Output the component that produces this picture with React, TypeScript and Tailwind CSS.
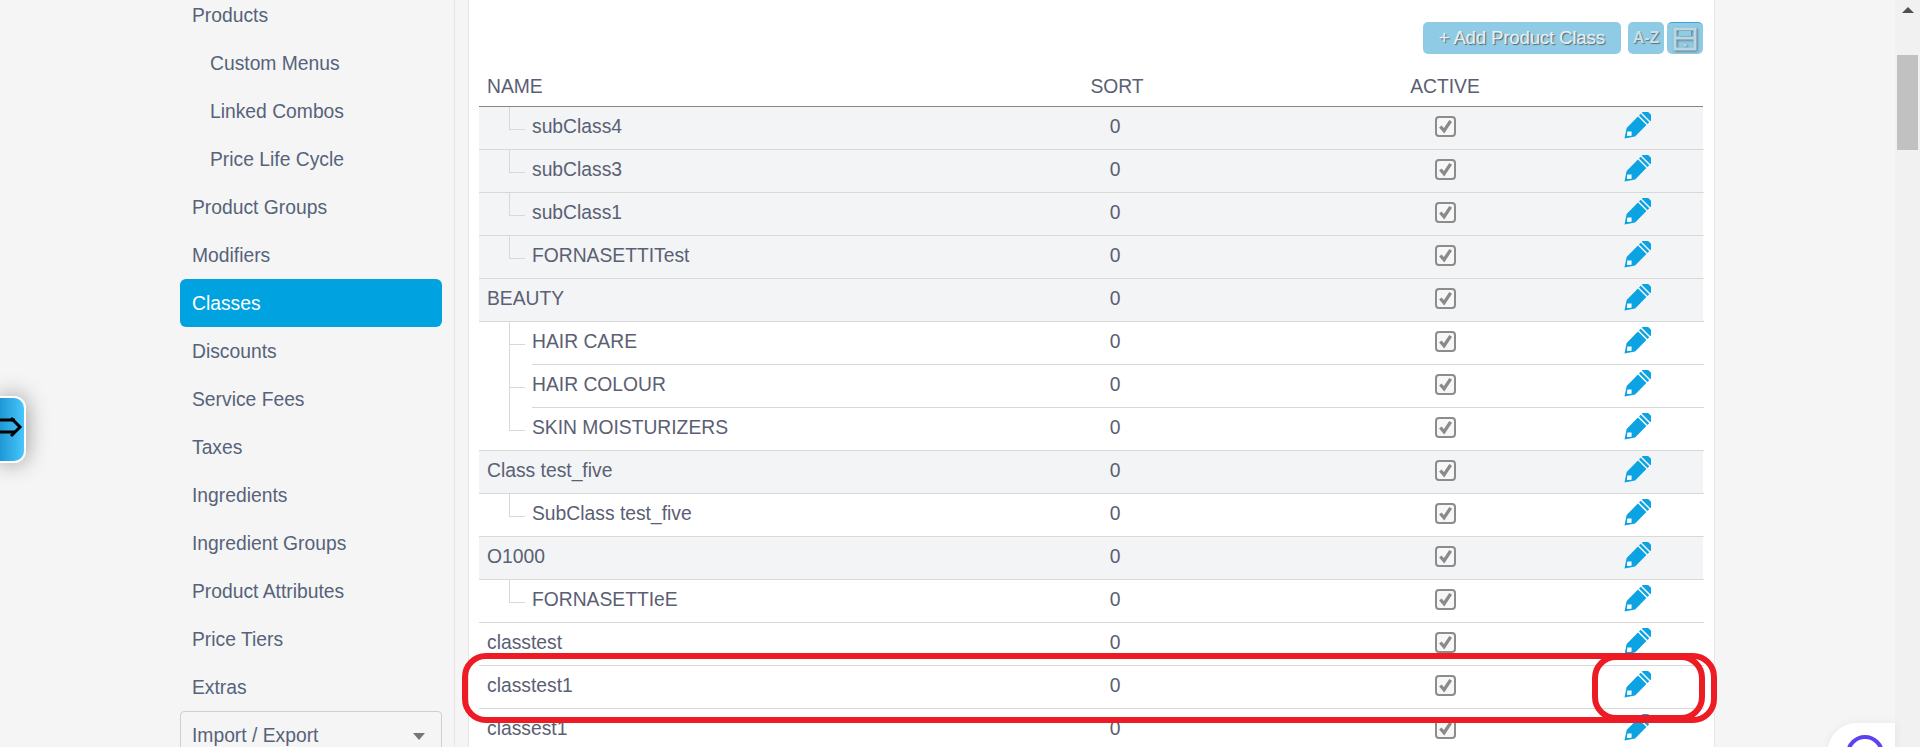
const menu = [
  { label: "Products" },
  { label: "Custom Menus", sub: true },
  { label: "Linked Combos", sub: true },
  { label: "Price Life Cycle", sub: true },
  { label: "Product Groups" },
  { label: "Modifiers" },
  { label: "Classes", active: true },
  { label: "Discounts" },
  { label: "Service Fees" },
  { label: "Taxes" },
  { label: "Ingredients" },
  { label: "Ingredient Groups" },
  { label: "Product Attributes" },
  { label: "Price Tiers" },
  { label: "Extras" },
];

type Row = { name: string; child?: boolean; open?: boolean; gray?: boolean };

const rows: Row[] = [
  { name: "subClass4", child: true, gray: true },
  { name: "subClass3", child: true, gray: true },
  { name: "subClass1", child: true, gray: true },
  { name: "FORNASETTITest", child: true, gray: true },
  { name: "BEAUTY", gray: true },
  { name: "HAIR CARE", child: true, open: true },
  { name: "HAIR COLOUR", child: true, open: true },
  { name: "SKIN MOISTURIZERS", child: true },
  { name: "Class test_five", gray: true },
  { name: "SubClass test_five", child: true },
  { name: "O1000", gray: true },
  { name: "FORNASETTIeE", child: true },
  { name: "classtest" },
  { name: "classtest1" },
  { name: "classest1" },
];

function Pencil() {
  return (
    <svg viewBox="0 0 27 27" className="w-[27px] h-[27px]">
      <g transform="translate(0.5 26.5) rotate(45)" fill="#0ca3e3">
        <path d="M0 0 L-6 -9 L-6 -25 L6 -25 L6 -9 Z" />
        <path d="M-6 -26.5 H6 V-29 H-6 Z" />
        <path d="M-6 -30.5 H6 V-33.5 Q6 -35.5 4 -35.5 H-4 Q-6 -35.5 -6 -33.5 Z" />
        <path d="M0 -3.5 L3 -7 L0 -10 L-3 -7 Z" fill="#ffffff" />
      </g>
    </svg>
  );
}

function Checkbox() {
  return (
    <div className="w-[21px] h-[21px] rounded-[4px] border-2 border-[#8c8c8c] bg-[#f7f7f7] flex items-center justify-center">
      <svg viewBox="0 0 16 16" className="w-[15px] h-[15px]">
        <path d="M2.5 8 L6.5 12.5 L13.5 2" fill="none" stroke="#8a8a8a" strokeWidth="3.5" />
      </svg>
    </div>
  );
}

function ClassRow({ row }: { row: Row }) {
  const full = !row.open;
  return (
    <div className={`flex h-[43px] shrink-0 ${row.gray ? "bg-[#f3f4f6]" : "bg-white"}`}>
      {row.child && (
        <div className={`w-[53px] shrink-0 pl-[30px] ${full ? "border-b border-[#d8d8d8]" : ""}`}>
          <div className={`w-[16px] border-l border-[#d8d8d8] ${row.open ? "h-full" : "h-[23px]"}`}>
            <div className="h-[23px] border-b border-[#d8d8d8]"></div>
          </div>
        </div>
      )}
      <div
        className={`flex-1 border-b border-[#d8d8d8] grid items-center pb-[1px] ${
          row.child ? "grid-cols-[380px_406px_254px_132px]" : "grid-cols-[433px_406px_254px_132px]"
        }`}
      >
        <div className={row.child ? "" : "pl-2"}>{row.name}</div>
        <div className="text-center">0</div>
        <div className="flex justify-center pb-[3px]">
          <Checkbox />
        </div>
        <div className="flex justify-center pb-[4px] pr-[2px]">
          <Pencil />
        </div>
      </div>
    </div>
  );
}

export default function App() {
  return (
    <div className="relative flex h-[747px] overflow-hidden bg-[#f5f5f5] font-['Liberation_Sans',Arial,sans-serif] text-[19.3px] text-[#5a6073]">
      <aside className="w-[455px] shrink-0 pl-[180px] pr-[12px] border-r border-[#e6e6e6]">
        <nav className="-mt-[9px]">
          {menu.map((item) => (
            <div
              key={item.label}
              className={`h-[48px] flex items-center pt-[2px] rounded-[6px] ${
                item.sub ? "pl-[30px]" : "pl-[12px]"
              } ${item.active ? "bg-[#00a3e0] text-white" : "text-[#56637a]"}`}
            >
              {item.label}
            </div>
          ))}
        </nav>
        <div className="h-[60px] border border-[#cfcfcf] rounded-[4px] pl-[11px] pr-[16px] pt-[10px] flex items-start justify-between text-[#56637a]">
          <span>Import / Export</span>
          <span className="mt-[11px] w-0 h-0 border-x-[6px] border-x-transparent border-t-[7px] border-t-[#777777]"></span>
        </div>
      </aside>

      <div className="w-[13px] shrink-0"></div>

      <main className="w-[1247px] shrink-0 h-[800px] bg-white border-x border-[#e6e6e6] pl-[10px] pr-[11px] pt-[22px]">
        <div className="flex justify-end h-[32px]">
          <button className="w-[198px] h-[32px] rounded-[5px] bg-[#8fcbe4] text-[#e3eff5] text-[18.3px] [text-shadow:1px_1px_1px_#4f5f68,0_0_1px_#e3eff5]">
            + Add Product Class
          </button>
          <button className="ml-[7px] w-[36px] h-[32px] rounded-[5px] bg-[#8fcbe4] text-[#c9dfe9] font-bold text-[16px] [text-shadow:1px_1px_1px_#5f7480]">
            A-Z
          </button>
          <button className="ml-[3px] w-[36px] h-[32px] rounded-[5px] border-t border-[#3da6d8] bg-[#8fcbe4] flex items-center justify-center">
            <svg viewBox="0 0 24 24" className="w-[24px] h-[24px] drop-shadow-[1px_1px_1px_#5f7480]">
              <path d="M2 2 H22 V22 H2 Z M2 11 H22" fill="none" stroke="#b9d6e4" strokeWidth="3" />
              <rect x="6" y="4" width="12" height="5" fill="#8fcbe4" />
              <rect x="11" y="17" width="2.5" height="2.5" fill="#b9d6e4" />
            </svg>
          </button>
        </div>

        <div className="h-[53px] grid grid-cols-[433px_406px_254px_132px] items-end pb-[4px] border-b border-[#858585]">
          <div className="pl-2">NAME</div>
          <div className="text-center pl-[4px]">SORT</div>
          <div className="text-center">ACTIVE</div>
          <div></div>
        </div>
        {rows.map((row) => (
          <ClassRow key={row.name} row={row} />
        ))}
      </main>

      <div className="flex-1"></div>

      <div className="w-[25px] shrink-0 bg-[#f1f1f1] flex flex-col items-center">
        <span className="mt-[7px] w-0 h-0 border-x-[6px] border-x-transparent border-b-[6px] border-b-[#505050]"></span>
        <div className="mt-[42px] w-[21px] h-[95px] bg-[#c1c1c1]"></div>
      </div>

      {/* left drawer tab */}
      <div className="absolute left-0 top-[396px] w-[26px] h-[67px] rounded-r-[12px] border-y-2 border-r-2 border-white bg-gradient-to-r from-[#1e98d5] to-[#47c6fc] shadow-[0_0_22px_rgba(0,0,0,0.4)]">
        <svg viewBox="0 0 24 63" className="w-[24px] h-[63px]">
          <path d="M0 22 H15 M0 34 H15" fill="none" stroke="#000000" strokeWidth="3" />
          <path d="M11 20 L20 29 L11 38" fill="none" stroke="#000000" strokeWidth="3" />
        </svg>
      </div>

      {/* chat widget */}
      <div className="absolute left-[1828px] top-[723px] w-[67px] h-[60px] rounded-tl-[28px] bg-white shadow-[0_0_10px_rgba(0,0,0,0.06)]">
        <div className="ml-[18px] mt-[12px] w-[38px] h-[38px] rounded-full border-[4px] border-[#5f41f2]"></div>
      </div>

      {/* red annotation marks */}
      <div className="absolute left-[462px] top-[653px] w-[1255px] h-[70px] rounded-[24px] border-[6px] border-[#ed1c24]"></div>
      <div className="absolute left-[1592px] top-[654px] w-[113px] h-[67px] rounded-[24px] border-[6px] border-[#ed1c24]"></div>
    </div>
  );
}
